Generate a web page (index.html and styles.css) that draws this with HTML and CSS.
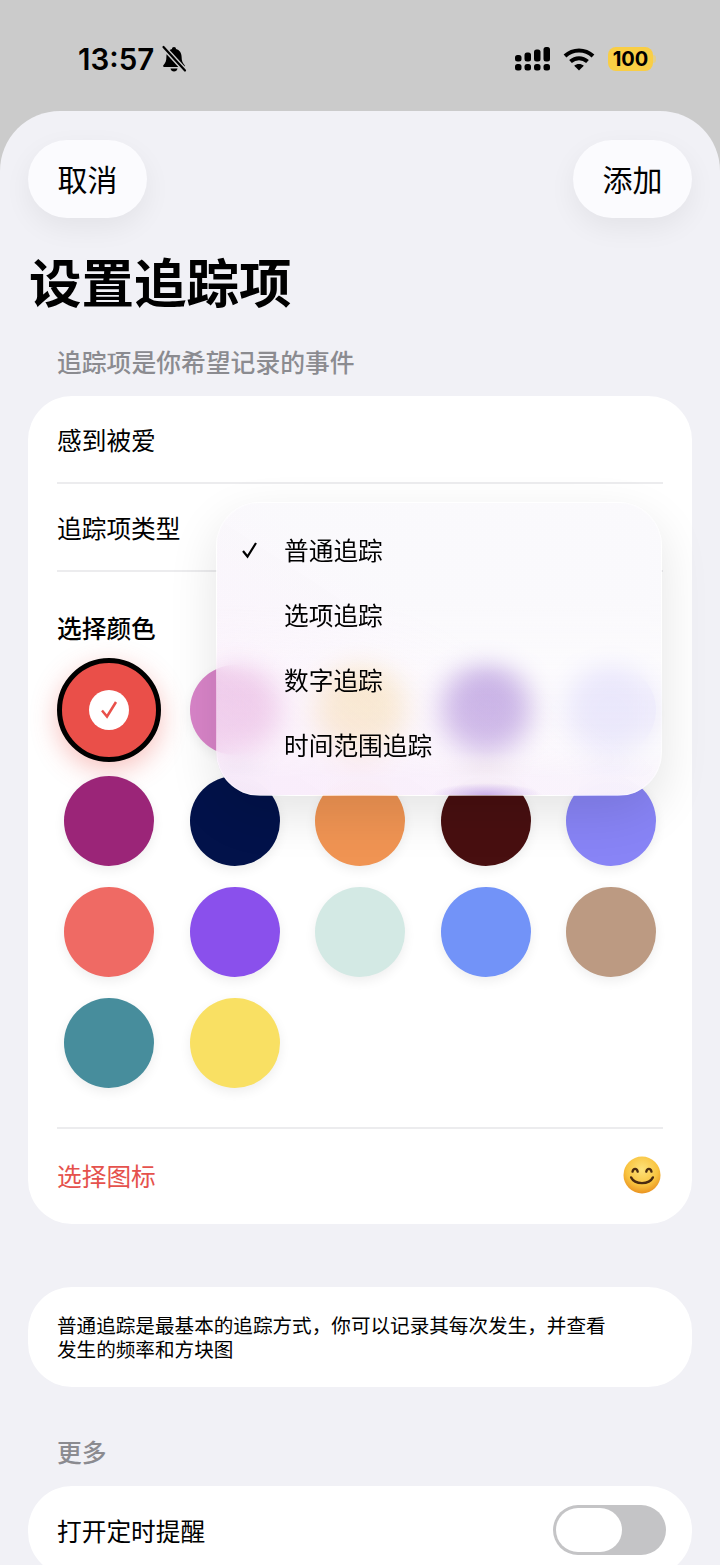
FILE: index.html
```html
<!DOCTYPE html>
<html lang="zh-CN">
<head>
    <meta charset="UTF-8">
    <meta name="viewport" content="width=device-width, initial-scale=1.0">
    <title>设置追踪项</title>
    <link rel="stylesheet" href="styles.css">
</head>
<body>
    <div class="status-bar">
        <div class="status-left">
            <span class="time">13:57</span>
            <svg class="bell" width="26" height="28" viewBox="0 0 26 28">
                <path d="M13 2c1.300 0 2 .9 2 1.900 3.600 1 5.600 4 5.600 7.900 0 4.300 1 6.300 3 8.400.6.700.2 1.800-.8 1.800H3.200c-1 0-1.400-1.100-.8-1.800 2-2.100 3-4.100 3-8.400 0-3.900 2-6.900 5.600-7.900C11 2.900 11.700 2 13 2z" fill="#000"/>
                <path d="M9.500 23.500h7c-.3 1.900-1.700 3-3.500 3s-3.200-1.100-3.500-3z" fill="#000"/>
                <path d="M2 1.500l22 24" stroke="#cbcbcb" stroke-width="5"/>
                <path d="M2.500 2l21.500 23.500" stroke="#000" stroke-width="2.200" stroke-linecap="round"/>
            </svg>
        </div>
        <div class="status-right">
            <svg width="36" height="24" viewBox="0 0 36 24" fill="#000">
                <rect x="0" y="8" width="6.500" height="6.500" rx="2.500"/>
                <rect x="9.500" y="5.500" width="6.500" height="9" rx="2.500"/>
                <rect x="19" y="2.500" width="6.500" height="12" rx="2.500"/>
                <rect x="28.500" y="0" width="6.500" height="14.500" rx="2.500"/>
                <rect x="0" y="17" width="6.500" height="6.500" rx="2.500"/>
                <rect x="9.500" y="17" width="6.500" height="6.500" rx="2.500"/>
                <rect x="19" y="17" width="6.500" height="6.500" rx="2.500"/>
                <rect x="28.500" y="17" width="6.500" height="6.500" rx="2.500"/>
            </svg>
            <svg class="wifi" width="32" height="24" viewBox="0 0 32 24" fill="none" stroke="#000" stroke-width="4">
                <path d="M2 9c8-7.500 20-7.500 28 0"/>
                <path d="M7.500 14.500c5-4.500 12-4.500 17 0"/>
                <path d="M16 23.500l-4.800-4.800c2.700-2.300 6.900-2.300 9.600 0z" fill="#000" stroke="none"/>
            </svg>
            <div class="battery"><span>100</span></div>
            <div class="battery-nub"></div>
        </div>
    </div>

    <main class="sheet">
        <div class="top-buttons">
            <button class="pill">取消</button>
            <button class="pill">添加</button>
        </div>
        <h1>设置追踪项</h1>
        <p class="section-label">追踪项是你希望记录的事件</p>

        <section class="card form-card">
            <div class="row name-row">感到被爱</div>
            <div class="row type-row">追踪项类型</div>
            <div class="color-title">选择颜色</div>
            <div class="swatches">
                <div class="swatch selected">
                    <span class="tick">
                        <svg width="24" height="24" viewBox="0 0 24 24" fill="none" stroke="#e9504a" stroke-width="2.500"><path d="M5 12.500l5 6L19 4"/></svg>
                    </span>
                </div>
                <div class="swatch c-pink"></div>
                <div class="swatch c-cream"></div>
                <div class="swatch c-violet"></div>
                <div class="swatch c-lavender"></div>
                <div class="swatch c-plum"></div>
                <div class="swatch c-navy"></div>
                <div class="swatch c-orange"></div>
                <div class="swatch c-maroon"></div>
                <div class="swatch c-periwinkle"></div>
                <div class="swatch c-coral"></div>
                <div class="swatch c-purple"></div>
                <div class="swatch c-mint"></div>
                <div class="swatch c-blue"></div>
                <div class="swatch c-tan"></div>
                <div class="swatch c-teal"></div>
                <div class="swatch c-yellow"></div>
            </div>
            <div class="row icon-row">
                <span class="icon-label">选择图标</span>
                <svg class="emoji" width="38" height="38" viewBox="0 0 40 40">
                    <defs>
                        <radialGradient id="face" cx="50%" cy="35%" r="65%">
                            <stop offset="0" stop-color="#fde27a"/>
                            <stop offset="0.65" stop-color="#f9c440"/>
                            <stop offset="1" stop-color="#ea9320"/>
                        </radialGradient>
                    </defs>
                    <circle cx="20" cy="20" r="19.500" fill="url(#face)"/>
                    <g fill="none" stroke="#4a2a10" stroke-width="2.400" stroke-linecap="round">
                        <path d="M10 16.500c.8-4 4.700-4 5.500 0"/>
                        <path d="M24.500 16.500c.8-4 4.700-4 5.500 0"/>
                        <path d="M8.500 22.500c4 8 19 8 23 0"/>
                    </g>
                </svg>
            </div>

            <ul class="type-menu">
                <li>
                    <svg width="18" height="18" viewBox="0 0 18 18" fill="none" stroke="#000" stroke-width="2.200"><path d="M2 10l4.500 5.500L15 2"/></svg>
                    普通追踪
                </li>
                <li>选项追踪</li>
                <li>数字追踪</li>
                <li>时间范围追踪</li>
            </ul>
        </section>

        <section class="card note-card">
            普通追踪是最基本的追踪方式，你可以记录其每次发生，并查看<br>发生的频率和方块图
        </section>

        <p class="section-label more-label">更多</p>

        <section class="card remind-card">
            <span>打开定时提醒</span>
            <div class="toggle"><div class="knob"></div></div>
        </section>
    </main>
</body>
</html>
```

FILE: styles.css
```css
* {
    box-sizing: border-box;
}

html,
body {
    height: 1565px;
}

body {
    margin: 0;
    overflow: hidden;
    background-color: #cbcbcb;
    color: #000;
    font-family: "Noto Sans CJK SC", "Liberation Sans", sans-serif;
}

.status-bar {
    height: 111px;
    padding: 41px 64px 0 78px;
    display: flex;
    justify-content: space-between;
    align-items: flex-start;
}

.status-left,
.status-right {
    display: flex;
    align-items: center;
    height: 36px;
}

.time {
    font-family: Inter, "Liberation Sans", sans-serif;
    font-size: 29.500px;
    font-weight: 600;
    line-height: 36px;
}

.bell {
    margin-left: 7px;
}

.wifi {
    margin-left: 12px;
}

.battery {
    width: 45px;
    height: 24px;
    margin-left: 13px;
    border-radius: 8px;
    background-color: #f9ce45;
    font-family: Inter, "Liberation Sans", sans-serif;
    font-size: 20px;
    font-weight: 700;
    line-height: 24px;
    text-align: center;
}

.battery-nub {
    width: 3px;
    height: 8px;
    border-radius: 0 3px 3px 0;
    background-color: #e3cf8c;
}

.sheet {
    height: 1454px;
    padding: 29px 28px 0;
    border-radius: 60px 60px 0 0;
    background-color: #f1f1f6;
    overflow: hidden;
}

.top-buttons {
    display: flex;
    justify-content: space-between;
}

.pill {
    width: 119px;
    height: 78px;
    padding: 0 0 2px;
    border: none;
    border-radius: 39px;
    background-color: #fbfbfe;
    box-shadow: 0 10px 28px rgba(0, 0, 0, 0.06);
    color: #000;
    font-family: inherit;
    font-size: 30px;
}

h1 {
    margin: 27px 0 0 1px;
    font-size: 52.500px;
    font-weight: 700;
    line-height: 70px;
}

.section-label {
    margin: 29px 0 0 29px;
    color: #8b8b90;
    font-size: 24.800px;
    font-weight: 500;
    line-height: 34px;
}

.card {
    background-color: #fff;
    border-radius: 44px;
}

.form-card {
    position: relative;
    height: 828px;
    margin-top: 18px;
    padding: 0 29px;
}

.row {
    display: flex;
    align-items: center;
    font-size: 24.700px;
}

.name-row {
    height: 88px;
    border-bottom: 2px solid #ececee;
}

.type-row {
    height: 88px;
    border-bottom: 2px solid #ececee;
}

.color-title {
    margin-top: 38px;
    font-size: 24.700px;
    font-weight: 500;
    line-height: 34px;
}

.swatches {
    display: grid;
    grid-template-columns: repeat(5, 90px);
    justify-content: space-between;
    row-gap: 21px;
    margin-top: 21px;
    padding: 0 7px;
}

.swatch {
    width: 90px;
    height: 90px;
    border-radius: 50%;
    box-shadow: 0 4px 12px rgba(0, 0, 0, 0.07);
}

.swatch.selected {
    display: flex;
    align-items: center;
    justify-content: center;
    width: 104px;
    height: 104px;
    margin: -7px;
    border: 5px solid #000;
    background-color: #ea4f49;
    box-shadow: 0 8px 26px rgba(234, 79, 73, 0.35);
}

.tick {
    display: flex;
    align-items: center;
    justify-content: center;
    width: 40px;
    height: 40px;
    border-radius: 50%;
    background-color: #fff;
}

.c-pink { background-color: #d884c8; }
.c-cream { background-color: #f7d88a; }
.c-violet { background-color: #8757c8; }
.c-lavender { background-color: #d6d2fb; }
.c-plum { background-color: #9b2578; }
.c-navy { background-color: #02124a; }
.c-orange { background-color: #f09453; }
.c-maroon { background-color: #480f10; }
.c-periwinkle { background-color: #8884f6; }
.c-coral { background-color: #ef6a64; }
.c-purple { background-color: #8a50ec; }
.c-mint { background-color: #d3e9e4; }
.c-blue { background-color: #7293f8; }
.c-tan { background-color: #bc9a82; }
.c-teal { background-color: #478d9c; }
.c-yellow { background-color: #f9e063; }

.icon-row {
    justify-content: space-between;
    height: 94px;
    margin-top: 39px;
    border-top: 2px solid #ececee;
}

.icon-label {
    color: #e5524d;
}

.emoji {
    margin-right: 2px;
}

.type-menu {
    position: absolute;
    top: 106px;
    left: 188px;
    width: 446px;
    height: 294px;
    margin: 0;
    padding: 14px 0;
    list-style: none;
    border: 1px solid rgba(255, 255, 255, 0.5);
    border-radius: 44px;
    background:
        radial-gradient(ellipse 55px 12px at 269px 100%, rgba(200, 170, 235, 0.9), rgba(200, 170, 235, 0)) no-repeat,
        linear-gradient(to top right, rgba(250, 225, 250, 0.45), rgba(250, 240, 250, 0) 55%) no-repeat,
        linear-gradient(to bottom, rgba(250, 249, 252, 0.97) 35%, rgba(250, 248, 252, 0.55) 58%, rgba(250, 248, 252, 0.6) 85%, rgba(249, 245, 252, 0.96) 94%) no-repeat;
    -webkit-backdrop-filter: blur(14px);
    backdrop-filter: blur(14px);
    box-shadow: 0 18px 50px rgba(0, 0, 0, 0.11);
    font-size: 24.700px;
}

.type-menu li {
    position: relative;
    height: 65px;
    padding-left: 67px;
    line-height: 65px;
}

.type-menu svg {
    position: absolute;
    top: 24px;
    left: 24px;
}

.note-card {
    height: 100px;
    margin-top: 63px;
    padding: 26px 29px 0 29px;
    font-size: 19.600px;
    line-height: 24px;
}

.more-label {
    margin-top: 47px;
}

.remind-card {
    display: flex;
    justify-content: space-between;
    align-items: flex-start;
    height: 90px;
    margin-top: 18px;
    padding: 19px 26px 0 29px;
    font-size: 24.700px;
    line-height: 50px;
}

.toggle {
    width: 113px;
    height: 50px;
    padding: 3px;
    border-radius: 25px;
    background-color: #c4c4c6;
}

.knob {
    width: 66px;
    height: 44px;
    border-radius: 22px;
    background-color: #fff;
}
```
